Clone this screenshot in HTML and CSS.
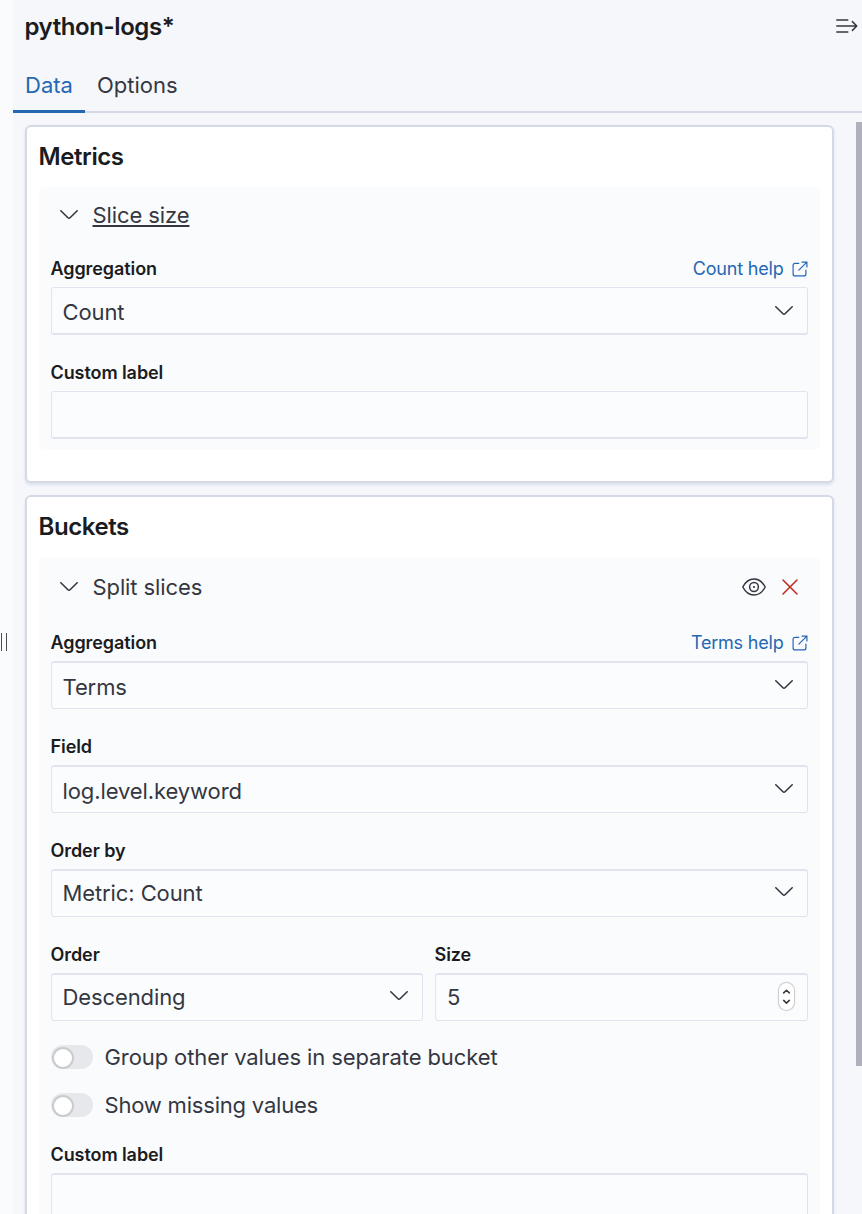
FILE: index.html
```html
<!DOCTYPE html>
<html lang="en">
<head>
<meta charset="utf-8">
<title>python-logs*</title>
<link rel="stylesheet" href="styles.css">
</head>
<body>
<svg class="sprite" aria-hidden="true">
  <symbol id="chevron" viewBox="0 0 20 12"><path d="M1.8 1.8 L8.7 8.5 Q10 9.7 11.3 8.5 L18.2 1.8"/></symbol>
  <symbol id="external" viewBox="0 0 16 16"><path d="M6.8 2.3H3.1Q1.1 2.3 1.1 4.3V12.9Q1.1 14.9 3.1 14.9H11.9Q13.9 14.9 13.9 12.9V9.2M10 1.1H14.9V6M14.9 1.1L6.8 9.2"/></symbol>
</svg>
<div class="app">
  <div class="resizer"><i class="grip"></i></div>
  <main class="sidebar">
    <header class="header">
      <h2 class="index-name">python-logs*</h2>
      <svg class="collapse" viewBox="0 0 22 16"><path d="M.8 2H11.8M.8 8H20.5M.8 14H11.8M16.4 3.6L20.8 8L16.4 12.4"/></svg>
    </header>
    <nav class="tabs">
      <a class="tab tab-active">Data</a>
      <a class="tab">Options</a>
    </nav>
    <div class="content">
      <div class="cards">
        <section class="card card-metrics">
          <h3 class="card-title">Metrics</h3>
          <div class="agg">
            <div class="agg-head">
              <svg class="chevron"><use href="#chevron"/></svg>
              <span class="agg-name underlined">Slice size</span>
            </div>
            <div class="field">
              <div class="label-row"><span class="label">Aggregation</span><a class="help">Count help<svg class="external"><use href="#external"/></svg></a></div>
              <div class="control low"><span class="value">Count</span><svg class="chevron"><use href="#chevron"/></svg></div>
            </div>
            <div class="field">
              <div class="label-row"><span class="label">Custom label</span></div>
              <div class="control low"></div>
            </div>
          </div>
        </section>
        <section class="card card-buckets">
          <h3 class="card-title">Buckets</h3>
          <div class="agg">
            <div class="agg-head">
              <svg class="chevron"><use href="#chevron"/></svg>
              <span class="agg-name">Split slices</span>
              <svg class="eye" viewBox="0 0 24 18"><path d="M.8 9C3.5 3.8 7.4 1 12 1S20.500 3.800 23.200 9C20.500 14.200 16.600 17 12 17S3.500 14.200 .8 9Z"/><circle cx="12" cy="9" r="4.400"/><circle class="pupil" cx="12" cy="9" r="1.100"/></svg>
              <svg class="remove" viewBox="0 0 16 16"><path d="M1 1L15 15M15 1L1 15"/></svg>
            </div>
            <div class="field">
              <div class="label-row"><span class="label">Aggregation</span><a class="help">Terms help<svg class="external"><use href="#external"/></svg></a></div>
              <div class="control dropped"><span class="value">Terms</span><svg class="chevron"><use href="#chevron"/></svg></div>
            </div>
            <div class="field">
              <div class="label-row"><span class="label">Field</span></div>
              <div class="control dropped"><span class="value">log.level.keyword</span><svg class="chevron"><use href="#chevron"/></svg></div>
            </div>
            <div class="field">
              <div class="label-row"><span class="label">Order by</span></div>
              <div class="control"><span class="value">Metric: Count</span><svg class="chevron"><use href="#chevron"/></svg></div>
            </div>
            <div class="field-pair">
              <div class="field">
                <div class="label-row"><span class="label">Order</span></div>
                <div class="control"><span class="value">Descending</span><svg class="chevron"><use href="#chevron"/></svg></div>
              </div>
              <div class="field">
                <div class="label-row"><span class="label">Size</span></div>
                <div class="control control-number"><span class="value">5</span><span class="stepper"><svg viewBox="0 0 16 28"><path d="M5 10.200L8 7.300L11 10.200M5 18.200L8 21.100L11 18.200"/></svg></span></div>
              </div>
            </div>
            <div class="switches">
              <div class="switch-row"><span class="switch"><i class="knob"></i></span><span class="switch-label">Group other values in separate bucket</span></div>
              <div class="switch-row"><span class="switch"><i class="knob"></i></span><span class="switch-label tight">Show missing values</span></div>
            </div>
            <div class="field">
              <div class="label-row"><span class="label">Custom label</span></div>
              <div class="control"></div>
            </div>
          </div>
        </section>
      </div>
      <div class="scrollbar"></div>
    </div>
  </main>
</div>
</body>
</html>
```
FILE: styles.css
```css
* { box-sizing: border-box; }
html, body { margin: 0; height: 100%; overflow: hidden; }
body { font-family: Inter, sans-serif; font-size: 22px; letter-spacing: -0.1px; color: #343741; background: #f5f7fb; }
h2, h3 { margin: 0; color: #1a1c21; font-weight: 600; }
svg { fill: none; flex: none; display: block; }
.sprite { position: absolute; width: 0; height: 0; }
.app { display: flex; height: 1214px; overflow: hidden; }
.resizer { width: 13px; flex: none; background: #fafbfd; display: flex; align-items: center; padding: 70px 0 0 1px; }
.grip { width: 6px; height: 18px; border: solid #4a4c54; border-width: 0 1px; }
.sidebar { flex: 1; min-width: 0; display: flex; flex-direction: column; }

.header { height: 54px; flex: none; display: flex; align-items: center; justify-content: space-between; padding: 0 4.5px 0 11.5px; }
.index-name { font-size: 24px; letter-spacing: -0.42px; line-height: 30px; }
.collapse { width: 22px; height: 16px; margin-top: -2px; stroke: #343741; stroke-width: 1.5; stroke-linecap: round; stroke-linejoin: round; }
.tabs { height: 59px; flex: none; display: flex; letter-spacing: 0; box-shadow: inset 0 -2px #d3dae6; }
.tab { padding: 0 12px; line-height: 62px; }
.tab-active { color: #2468b4; box-shadow: inset 0 -3px #2468b4; }

.content { flex: 1; min-height: 0; display: flex; justify-content: space-between; }
.cards { width: 821px; padding: 12px 0 0 12px; display: flex; flex-direction: column; gap: 12px; }
.card { flex: none; border: 2px solid #d3dae6; border-radius: 6px; background: #fff; padding: 0 12px; box-shadow: 0 2px 3px rgba(100, 120, 160, .18); }
.card-metrics { height: 358px; }
.card-buckets { height: 740px; }
.card-title { font-size: 24px; letter-spacing: -0.42px; line-height: 60px; margin-left: -0.5px; }
.agg { background: #fafbfd; border-radius: 6px; padding: 0 12px 11px; }
.agg-head { height: 60px; display: flex; align-items: center; padding: 0 10px 4px 8px; }
.agg-head .chevron { margin-right: 13.5px; }
.agg-name { line-height: 28px; margin-right: auto; }
.underlined { text-decoration: underline; text-decoration-thickness: 1.5px; text-underline-offset: 2px; }
.card-buckets .agg-head { height: 64px; }
.chevron { width: 20px; height: 12px; stroke: #343741; stroke-width: 1.6; stroke-linecap: round; }
.eye { width: 24px; height: 18px; stroke: #343741; stroke-width: 1.5; margin-right: 16px; }
.pupil { fill: #343741; stroke: none; }
.remove { width: 16px; height: 16px; stroke: #bd271e; stroke-width: 1.5; stroke-linecap: round; }

.field { height: 104px; }
.card-metrics .field:last-child { height: 88px; }
.label-row { height: 40px; display: flex; justify-content: space-between; align-items: center; padding-top: 2px; font-size: 18px; }
.label { font-weight: 600; color: #1a1c21; letter-spacing: -0.08px; margin-left: -0.5px; }
.help { display: flex; align-items: center; gap: 8px; color: #2468b4; letter-spacing: -0.2px; padding-right: 0.5px; }
.external { width: 16px; height: 16px; margin-top: 2px; stroke: #2468b4; stroke-width: 1.2; stroke-linecap: round; }
.control { height: 48px; border: 1px solid #e1e4ee; border-top-width: 2px; border-radius: 3px; background: #fbfcfe; display: flex; align-items: center; justify-content: space-between; padding: 0 13px 2px 10.5px; }
.control .chevron { margin-bottom: 1px; }
.control.low { border-top-width: 1px; border-bottom-width: 2px; }
.dropped, .control.low { padding-bottom: 0; }
.low .chevron { margin-bottom: 0; }
.value { line-height: 28px; }
.dropped .value, .low .value { padding-top: 3px; }
.control-number { padding-left: 11px; }
.field-pair { display: grid; grid-template-columns: 372px 373px; gap: 12px; }
.stepper { width: 15px; height: 27px; border-radius: 8px; background: #fff; box-shadow: 0 0 1px 1px #c8c8ca; margin-right: 0.5px; }
.stepper svg { width: 15px; height: 27px; stroke: #3a3a3c; stroke-width: 1.7; stroke-linecap: round; stroke-linejoin: round; }
.switches { margin-top: -4px; padding-bottom: 4px; }
.switch-row { height: 48px; display: flex; align-items: center; gap: 11.5px; }
.switch { width: 42px; height: 24px; border-radius: 12px; background: #e7e8ec; padding: 2px 0 0 1px; }
.knob { display: block; width: 22px; height: 22px; border-radius: 50%; background: #fff; border: 2px solid #cacbce; }
.switch-label { line-height: 28px; }
.tight { letter-spacing: -0.2px; }
.scrollbar { width: 6px; height: 944px; margin-top: 9px; background: #aeb1bb; }
```
